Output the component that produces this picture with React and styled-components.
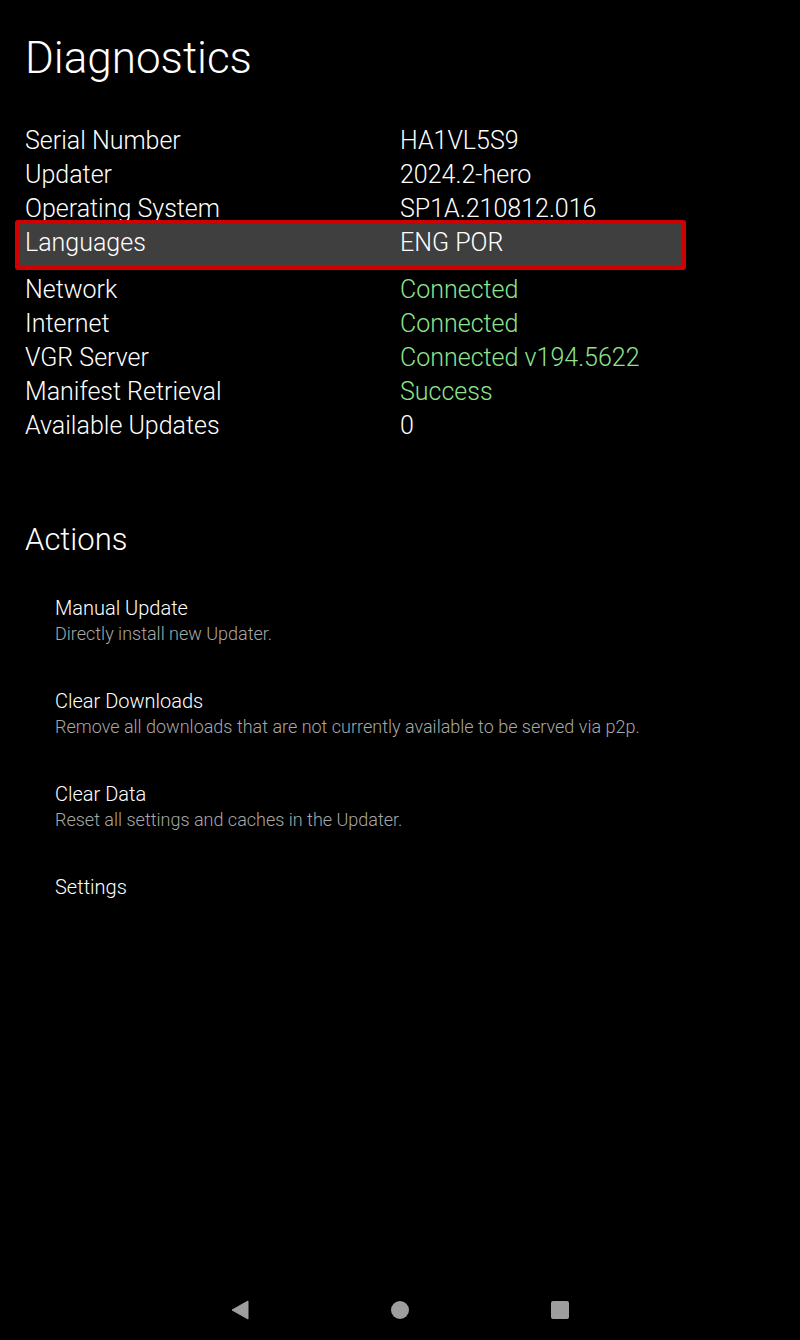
import React from "react";
import styled, { createGlobalStyle } from "styled-components";

const GlobalStyle = createGlobalStyle`
  html, body {
    margin: 0;
    padding: 0;
    background: #000;
  }
  body {
    font-family: Roboto, "Noto Sans", sans-serif;
    color: #fff;
  }
`;

const Screen = styled.div`
  width: 800px;
  height: 1340px;
  background: #000;
  display: flex;
  flex-direction: column;
  overflow: hidden;
`;

const Content = styled.div`
  flex: 1;
  padding: 30px 0 0 25px;
  display: flex;
  flex-direction: column;
`;

const Title = styled.h1`
  margin: 0;
  font-size: 44px;
  font-weight: 300;
  line-height: 56px;
  color: #fff;
`;

const InfoList = styled.div`
  margin-top: 37px;
  display: flex;
  flex-direction: column;
`;

const Row = styled.div`
  display: grid;
  grid-template-columns: 375px 1fr;
  height: 34px;
  align-items: center;
  font-size: 25px;
  font-weight: 300;
  width: 661px;
  box-sizing: border-box;
  ${(p) =>
    p.$selected &&
    `
    height: 50px;
    margin: -5px 0 2px -10px;
    padding: 0 0 6px 6px;
    width: 671px;
    background: #3f3f3f;
    border: 4px solid #d10000;
    border-radius: 3px;
  `}
`;

const Label = styled.span`
  color: #fff;
`;

const Value = styled.span`
  color: ${(p) => (p.$ok ? "#8ee38e" : "#fff")};
`;

const SectionTitle = styled.h2`
  margin: 78px 0 0;
  font-size: 31px;
  font-weight: 300;
  line-height: 40px;
  color: #fff;
`;

const ActionList = styled.div`
  margin-top: 34px;
  padding-left: 30px;
  display: flex;
  flex-direction: column;
  gap: 40px;
`;

const Action = styled.div`
  display: flex;
  flex-direction: column;
  min-height: 53px;
`;

const ActionName = styled.div`
  font-size: 20px;
  font-weight: 300;
  line-height: 28px;
  color: #fff;
`;

const ActionDesc = styled.div`
  font-size: 18px;
  font-weight: 300;
  line-height: 24px;
  color: #a8a8a8;
`;

const NavBar = styled.div`
  height: 60px;
  display: flex;
  align-items: center;
  justify-content: center;
  gap: 140px;
`;

const NavButton = styled.div`
  width: 20px;
  height: 20px;
  display: flex;
  align-items: center;
  justify-content: center;
`;

const info = [
  { label: "Serial Number", value: "HA1VL5S9" },
  { label: "Updater", value: "2024.2-hero" },
  { label: "Operating System", value: "SP1A.210812.016" },
  { label: "Languages", value: "ENG POR", selected: true },
  { label: "Network", value: "Connected", ok: true },
  { label: "Internet", value: "Connected", ok: true },
  { label: "VGR Server", value: "Connected v194.5622", ok: true },
  { label: "Manifest Retrieval", value: "Success", ok: true },
  { label: "Available Updates", value: "0" },
];

const actions = [
  { name: "Manual Update", desc: "Directly install new Updater." },
  {
    name: "Clear Downloads",
    desc: "Remove all downloads that are not currently available to be served via p2p.",
  },
  { name: "Clear Data", desc: "Reset all settings and caches in the Updater." },
  { name: "Settings" },
];

export default function App() {
  return (
    <>
      <GlobalStyle />
      <Screen>
        <Content>
          <Title>Diagnostics</Title>
          <InfoList>
            {info.map((r) => (
              <Row key={r.label} $selected={r.selected}>
                <Label>{r.label}</Label>
                <Value $ok={r.ok}>{r.value}</Value>
              </Row>
            ))}
          </InfoList>

          <SectionTitle>Actions</SectionTitle>
          <ActionList>
            {actions.map((a) => (
              <Action key={a.name}>
                <ActionName>{a.name}</ActionName>
                {a.desc && <ActionDesc>{a.desc}</ActionDesc>}
              </Action>
            ))}
          </ActionList>
        </Content>

        <NavBar>
          <NavButton>
            <svg width="20" height="20" viewBox="0 0 20 20">
              <path d="M18 1 L18 19 L2 10 Z" fill="#9e9e9e" strokeLinejoin="round" stroke="#9e9e9e" strokeWidth="1" />
            </svg>
          </NavButton>
          <NavButton>
            <svg width="20" height="20" viewBox="0 0 20 20">
              <circle cx="10" cy="10" r="9" fill="#9e9e9e" />
            </svg>
          </NavButton>
          <NavButton>
            <svg width="20" height="20" viewBox="0 0 20 20">
              <rect x="1" y="1" width="18" height="18" rx="2" fill="#9e9e9e" />
            </svg>
          </NavButton>
        </NavBar>
      </Screen>
    </>
  );
}
